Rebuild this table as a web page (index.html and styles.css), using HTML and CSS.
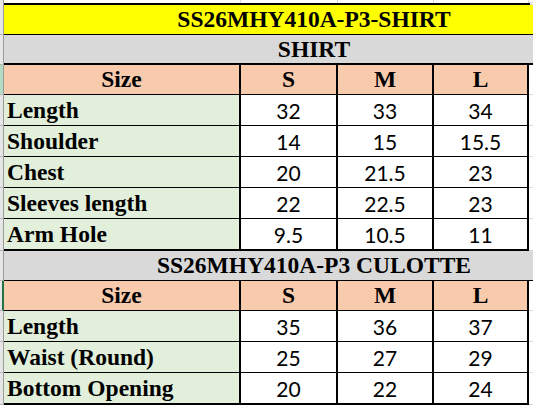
FILE: index.html
```html
<!DOCTYPE html>
<html>
<head>
<meta charset="utf-8">
<link rel="stylesheet" href="styles.css">
</head>
<body>
<div class="sheet">
  <div class="row top">
    <div class="rh"></div>
    <div class="g c1"></div><div class="g c2"></div><div class="g c3"></div><div class="g c4"></div><div class="fill"></div>
  </div>
  <div class="row topline">
    <div class="rh"></div>
    <div class="bar"></div><div class="fill"></div>
  </div>
  <div class="row title">
    <div class="rh"></div>
    <div class="merged yellow">SS26MHY410A-P3-SHIRT</div>
  </div>
  <div class="row sub">
    <div class="rh"></div>
    <div class="merged grey thick">SHIRT</div>
  </div>
  <div class="row hdr">
    <div class="rh sel"></div>
    <div class="cell lab h c1">Size</div>
    <div class="cell h c2">S</div>
    <div class="cell h c3">M</div>
    <div class="cell h c4">L</div>
    <div class="fill"></div>
  </div>
  <div class="row data">
    <div class="rh"></div>
    <div class="cell lab c1">Length</div>
    <div class="cell num c2">32</div>
    <div class="cell num c3">33</div>
    <div class="cell num c4">34</div>
    <div class="fill"></div>
  </div>
  <div class="row data">
    <div class="rh"></div>
    <div class="cell lab c1">Shoulder</div>
    <div class="cell num c2">14</div>
    <div class="cell num c3">15</div>
    <div class="cell num c4">15.5</div>
    <div class="fill"></div>
  </div>
  <div class="row data">
    <div class="rh"></div>
    <div class="cell lab c1">Chest</div>
    <div class="cell num c2">20</div>
    <div class="cell num c3">21.5</div>
    <div class="cell num c4">23</div>
    <div class="fill"></div>
  </div>
  <div class="row data">
    <div class="rh"></div>
    <div class="cell lab c1">Sleeves length</div>
    <div class="cell num c2">22</div>
    <div class="cell num c3">22.5</div>
    <div class="cell num c4">23</div>
    <div class="fill"></div>
  </div>
  <div class="row data last">
    <div class="rh"></div>
    <div class="cell lab c1">Arm Hole</div>
    <div class="cell num c2">9.5</div>
    <div class="cell num c3">10.5</div>
    <div class="cell num c4">11</div>
    <div class="fill"></div>
  </div>
  <div class="row sub2">
    <div class="rh"></div>
    <div class="merged grey">SS26MHY410A-P3 CULOTTE</div>
  </div>
  <div class="row hdr">
    <div class="rh active"></div>
    <div class="cell lab h c1">Size</div>
    <div class="cell h c2">S</div>
    <div class="cell h c3">M</div>
    <div class="cell h c4">L</div>
    <div class="fill"></div>
  </div>
  <div class="row data">
    <div class="rh"></div>
    <div class="cell lab c1">Length</div>
    <div class="cell num c2">35</div>
    <div class="cell num c3">36</div>
    <div class="cell num c4">37</div>
    <div class="fill"></div>
  </div>
  <div class="row data">
    <div class="rh"></div>
    <div class="cell lab c1">Waist (Round)</div>
    <div class="cell num c2">25</div>
    <div class="cell num c3">27</div>
    <div class="cell num c4">29</div>
    <div class="fill"></div>
  </div>
  <div class="row data last">
    <div class="rh"></div>
    <div class="cell lab c1">Bottom Opening</div>
    <div class="cell num c2">20</div>
    <div class="cell num c3">22</div>
    <div class="cell num c4">24</div>
    <div class="fill"></div>
  </div>
</div>
</body>
</html>
```
FILE: styles.css
```css
* { box-sizing: border-box; margin: 0; padding: 0; }
html, body { width: 533px; height: 405px; overflow: hidden; background: #fff; }
.sheet { display: flex; flex-direction: column; width: 533px; height: 405px; overflow: hidden; }
.row { display: flex; flex: none; overflow: hidden; }
.rh { width: 4px; flex: none; background: #e6e6e6; border-right: 1px solid #9b9b9b; border-bottom: 1px solid #b4b4b4; }
.rh.sel { background: #b4dcc4; }
.rh.active { border-right: 2px solid #217346; }

.top { height: 3px; }
.top .rh { border-bottom: none; }
.g { flex: none; border-right: 1px solid #d9d9d9; }
.topline { height: 2px; }
.topline .rh { border-bottom: none; }
.bar { width: 526px; flex: none; background: #000; }
.fill { flex: 1; border-bottom: 1px solid #d9d9d9; }

.c1 { width: 237px; flex: none; }
.c2 { width: 97px; flex: none; }
.c3 { width: 96px; flex: none; }
.c4 { width: 95px; flex: none; }

.merged {
  width: 620px; flex: none; text-align: center;
  font-family: "Liberation Serif", "Times New Roman", serif; font-weight: bold; font-size: 23.5px;
  color: #000; border-bottom: 1px solid #000;
}
.yellow { background: #ffff00; line-height: 29px; }
.grey { background: #d9d9d9; line-height: 29px; }
.grey.thick { border-bottom-width: 2px; line-height: 28px; }
.title, .sub, .sub2, .hdr { height: 30px; }
.data { height: 31px; }
.data.last { height: 32px; }

.cell { border-right: 2px solid #000; border-bottom: 1px solid #000; color: #000; }
.last .cell { border-bottom-width: 2px; }
.lab {
  background: #e2efda; padding-left: 3px;
  font-family: "Liberation Serif", "Times New Roman", serif; font-weight: bold; font-size: 23.5px; line-height: 30px;
  white-space: nowrap;
}
.h {
  background: #f8cbad; text-align: center; padding-left: 0;
  font-family: "Liberation Serif", "Times New Roman", serif; font-weight: bold; font-size: 23.5px; line-height: 29px;
}
.num { text-align: center; font-family: Lato, "Open Sans", sans-serif; font-size: 21px; line-height: 30px; padding-top: 1px; background: #fff; }
```
